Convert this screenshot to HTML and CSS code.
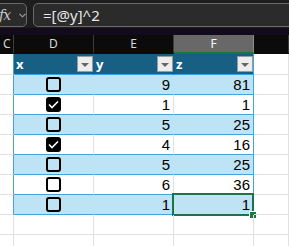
FILE: index.html
```html
<!DOCTYPE html>
<html lang="en">
<head>
    <meta charset="UTF-8">
    <title>Sheet</title>
    <link rel="stylesheet" href="styles.css">
</head>
<body>
    <div class="topbar">
        <div class="fxbox">
            <span class="fx">fx</span>
            <svg class="chev" width="8" height="5" viewBox="0 0 8 5"><polyline points="0.5,0.5 4,4 7.5,0.5" fill="none" stroke="#a8a8a8" stroke-width="1.2"/></svg>
        </div>
        <div class="formula">=[@y]^2</div>
    </div>
    <div class="band"></div>

    <div class="row colheads">
        <div class="cell">C</div>
        <div class="cell center">D</div>
        <div class="cell center">E</div>
        <div class="cell center active">F</div>
        <div class="cell"></div>
    </div>

    <div class="row thead">
        <div class="cell side"></div>
        <div class="cell th">x <span class="filter"></span></div>
        <div class="cell th">y <span class="filter"></span></div>
        <div class="cell th last">z <span class="filter"></span></div>
        <div class="cell rest"></div>
    </div>

    <div class="row tr band1">
        <div class="cell side"></div>
        <div class="cell td box"><span class="check"></span></div>
        <div class="cell td num">9</div>
        <div class="cell td num last">81</div>
        <div class="cell rest"></div>
    </div>
    <div class="row tr">
        <div class="cell side"></div>
        <div class="cell td box"><span class="check on"><svg width="11" height="9" viewBox="0 0 11 9"><polyline points="1,4.5 4,7.5 10,1.5" fill="none" stroke="#fff" stroke-width="1.6"/></svg></span></div>
        <div class="cell td num">1</div>
        <div class="cell td num last">1</div>
        <div class="cell rest"></div>
    </div>
    <div class="row tr band1">
        <div class="cell side"></div>
        <div class="cell td box"><span class="check"></span></div>
        <div class="cell td num">5</div>
        <div class="cell td num last">25</div>
        <div class="cell rest"></div>
    </div>
    <div class="row tr">
        <div class="cell side"></div>
        <div class="cell td box"><span class="check on"><svg width="11" height="9" viewBox="0 0 11 9"><polyline points="1,4.5 4,7.5 10,1.5" fill="none" stroke="#fff" stroke-width="1.6"/></svg></span></div>
        <div class="cell td num">4</div>
        <div class="cell td num last">16</div>
        <div class="cell rest"></div>
    </div>
    <div class="row tr band1">
        <div class="cell side"></div>
        <div class="cell td box"><span class="check"></span></div>
        <div class="cell td num">5</div>
        <div class="cell td num last">25</div>
        <div class="cell rest"></div>
    </div>
    <div class="row tr">
        <div class="cell side"></div>
        <div class="cell td box"><span class="check"></span></div>
        <div class="cell td num">6</div>
        <div class="cell td num last">36</div>
        <div class="cell rest"></div>
    </div>
    <div class="row tr band1">
        <div class="cell side"></div>
        <div class="cell td box"><span class="check"></span></div>
        <div class="cell td num">1</div>
        <div class="cell td num last selected">1<span class="selbox"></span><span class="handle"></span></div>
        <div class="cell rest"></div>
    </div>

    <div class="row empty">
        <div class="cell"></div><div class="cell"></div><div class="cell"></div><div class="cell"></div><div class="cell"></div>
    </div>
    <div class="row empty">
        <div class="cell"></div><div class="cell"></div><div class="cell"></div><div class="cell"></div><div class="cell"></div>
    </div>
</body>
</html>
```

FILE: styles.css
```css
html, body {
    margin: 0;
    background: #fff;
    overflow: hidden;
}
.topbar {
    height: 28px;
    box-sizing: border-box;
    padding-top: 3px;
    background: #1d1d1d;
    display: flex;
    align-items: flex-start;
    overflow: hidden;
}
.fxbox {
    margin-left: -7px;
    width: 34px;
    height: 24px;
    box-sizing: border-box;
    border: 1px solid #6a6a6a;
    border-radius: 5px;
    background: #2b2b2b;
    display: flex;
    align-items: center;
    padding-left: 5px;
    flex-shrink: 0;
}
.fx {
    font-family: "DejaVu Serif", serif;
    font-style: italic;
    font-size: 14px;
    color: #c8c8c8;
    letter-spacing: -1px;
}
.chev {
    margin-left: 9px;
}
.formula {
    margin-left: 6px;
    margin-right: -10px;
    flex: 1;
    height: 24px;
    box-sizing: border-box;
    border: 1px solid #6a6a6a;
    border-radius: 5px;
    background: #2b2b2b;
    color: #e6e6e6;
    font-family: "Noto Sans", sans-serif;
    font-size: 15px;
    line-height: 22px;
    padding-left: 9px;
}
.band {
    height: 7px;
    background: #130b1b;
}
.row {
    display: grid;
    grid-template-columns: 14px 80px 80px 80px 1fr;
    height: 20px;
}
.cell {
    box-sizing: border-box;
    border-right: 1px solid #e1e1e1;
    border-bottom: 1px solid #e1e1e1;
    position: relative;
}

/* column letters */
.colheads {
    height: 19px;
    background: #0b0b0b;
}
.colheads .cell {
    border-right: 1px solid #3c3c3c;
    border-bottom: 2px solid #0b0b0b;
    color: #d8d8d8;
    font-family: "Noto Sans", sans-serif;
    font-size: 12px;
    line-height: 17px;
    padding-left: 3px;
}
.colheads .center {
    text-align: center;
    padding-left: 0;
}
.colheads .active {
    background: #686868;
    border-bottom-color: #1f7244;
    border-right-color: #8a8a8a;
    color: #fff;
}

/* table */
.thead {
    height: 21px;
}
.side {
    border-right-color: #42a4dc;
}
.th {
    background: #175f83;
    border-right-color: #175f83;
    border-bottom-color: #42a4dc;
    color: #fff;
    font-family: "Noto Sans", sans-serif;
    font-weight: bold;
    font-size: 13px;
    line-height: 19px;
    padding-left: 2px;
    display: flex;
    justify-content: space-between;
    align-items: center;
}
.last {
    border-right-color: #42a4dc;
}
.filter {
    width: 16px;
    height: 16px;
    box-sizing: border-box;
    background: #ededed;
    border: 1px solid #9a9a9a;
    display: flex;
    align-items: center;
    justify-content: center;
    margin-right: 0;
}
.filter::after {
    content: "";
    border-left: 4px solid transparent;
    border-right: 4px solid transparent;
    border-top: 4px solid #666;
    margin-top: 1px;
}
.td {
    border-bottom-color: #42a4dc;
}
.band1 .td {
    background: #bee3f5;
    border-right-color: #bee3f5;
}
.band1 .td.last,
.tr .td.last {
    border-right-color: #42a4dc;
}
.num {
    font-family: "Liberation Sans", Arial, sans-serif;
    font-size: 15px;
    line-height: 19px;
    text-align: right;
    padding-right: 3px;
    color: #000;
}
.box {
    display: flex;
    align-items: center;
    justify-content: center;
}
.check {
    width: 15px;
    height: 15px;
    box-sizing: border-box;
    border: 2px solid #000;
    border-radius: 3px;
    margin-left: -1px;
    display: flex;
    align-items: center;
    justify-content: center;
}
.check.on {
    background: #000;
}
.selbox {
    position: absolute;
    left: -2px;
    top: -2px;
    right: -1px;
    bottom: -2px;
    border: 2px solid #1f7244;
}
.handle {
    position: absolute;
    right: -4px;
    bottom: -5px;
    width: 6px;
    height: 6px;
    background: #1f7244;
    border: 1px solid #fff;
}
```
